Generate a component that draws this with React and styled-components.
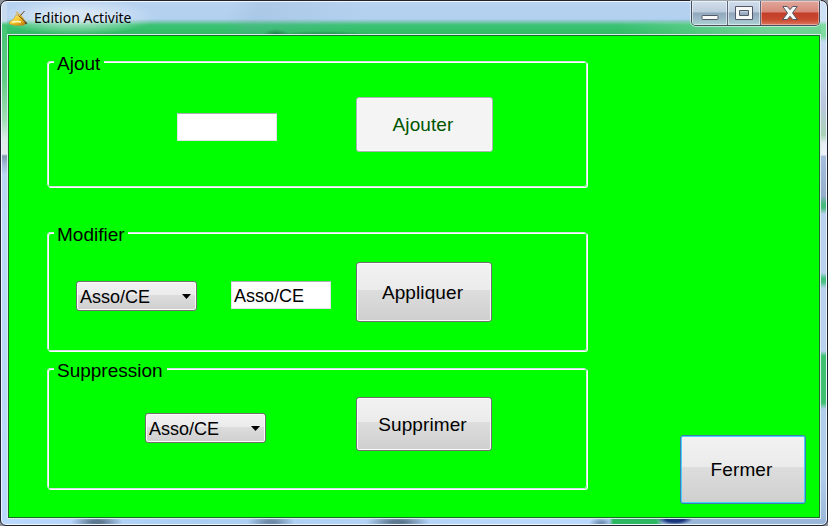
import React from "react";
import styled, { createGlobalStyle, css } from "styled-components";

const GlobalStyle = createGlobalStyle`
  *, *::before, *::after { box-sizing: border-box; }
  body { margin: 0; background: #8f9296; overflow: hidden; }
  button, input { font-family: inherit; margin: 0; }
`;

const Window = styled.main`
  width: 828px;
  height: 526px;
  display: flex;
  flex-direction: column;
  padding: 1px 6px 6px;
  border: 1px solid #20222e;
  border-radius: 7px 7px 6px 6px;
  box-shadow: inset 0 0 0 1px #eef6ff;
  font-family: "Liberation Sans", Arial, sans-serif;
  background:
    radial-gradient(ellipse 26px 7px at 96px 521px, #5d7890 20%, transparent) no-repeat,
    radial-gradient(ellipse 24px 7px at 270px 521px, #6f8ba8 20%, transparent) no-repeat,
    radial-gradient(ellipse 32px 7px at 397px 521px, #5d7890 20%, transparent) no-repeat,
    radial-gradient(ellipse 12px 6px at 600px 522px, #7795b8 20%, transparent) no-repeat,
    radial-gradient(ellipse 18px 6px at 674px 518px, #18347c 50%, transparent) no-repeat,
    linear-gradient(90deg, transparent 608px, #2bb860 612px, #2bb860 655px, #9ab6d8 662px) 0 518px / 100% 8px no-repeat,
    linear-gradient(180deg, #d0e2f8 0, #cddff5 20px, #80dba0 24px, #80dba0 35px, #c6dbf2 41px,
      #c3d4ea 75px, #b9c6dc 105px, #a9d4b8 134px, #e6eef4 142px, #eef3f8 154px, #a6bfe0 155px, #94aecb 195px,
      #48ba7e 203px, #48ba7e 207px, #b8d2ef 213px, #b8d2ef 272px, #48c084 277px, #48c084 281px,
      #b8d2ef 287px, #b8d2ef 350px, #3ec070 355px, #3ec070 402px, #b0cdec 408px, #b0cdec 475px, #9ab6d8) 100% 0 / 8px 100% no-repeat,
    linear-gradient(180deg, #c8daee 0, #c8daee 20px, #44c574 24px, #63cc88 80px, #a5deb9 120px,
      #dcebe8 138px, #e6e9ee 153px, #8297af 155px, #a0b9d6 163px, #bbd7f6 174px, #bbd9ff) 0 0 / 8px 100% no-repeat,
    linear-gradient(90deg, #bbd9ff 0, #abcef2 200px, #b9d8fa 520px, #bbd9ff 610px) no-repeat;
`;

const TitleBar = styled.header`
  height: 32px;
  flex: none;
  display: flex;
  align-items: flex-start;
  background:
    radial-gradient(ellipse 80px 18px at 70px 15px, #edf4f8a0 30%, transparent) no-repeat,
    radial-gradient(ellipse 13px 6px at 269px 33px, #0c5a35b0, transparent) no-repeat,
    radial-gradient(ellipse 50px 4px at 315px 33px, #0c5a3580, transparent) no-repeat,
    linear-gradient(115deg, transparent 205px, #7b9cb928 230px, transparent 330px) no-repeat,
    linear-gradient(90deg, transparent 610px, #a9e6bd80 760px) 0 20px / 100% 12px no-repeat,
    linear-gradient(180deg, #b8d2f0 0, #b2d0f0 17px, #78c6b0 20px, #3cc375 23px, #2fbb63 32px);
`;

const TitleText = styled.h1`
  margin: 6px auto 0 5px;
  font: 400 14px/20px "Noto Sans", "Open Sans", sans-serif;
  letter-spacing: 0;
  color: #000;
  white-space: nowrap;
`;

const AppIcon = styled.svg`
  width: 21px;
  height: 18px;
  margin: 7px 0 0 1px;
`;

const Controls = styled.div`
  display: flex;
  height: 25px;
  margin: -1px 1px 0 0;
  border: 1px solid #454c5e;
  border-top: 0;
  border-radius: 0 0 5px 5px;
  overflow: hidden;
  box-shadow: 0 0 0 1px #eaf5f5a0;
`;

const ControlButton = styled.button`
  width: ${(p) => p.$width}px;
  display: flex;
  align-items: center;
  justify-content: center;
  padding: 0;
  border: 0;
  border-left: ${(p) => (p.$divided ? "1px solid #5d687c" : "0")};
  background: ${(p) =>
    p.$danger
      ? "linear-gradient(180deg, #e1a79d 0, #d88678 11px, #c33d27 12px, #cb4a31 19px, #db7860 24px)"
      : "linear-gradient(180deg, #d2dfed 0, #bccbdc 11px, #91a6bd 12px, #9fb8c9 18px, #aed2d3 24px)"};
  box-shadow: inset 0 0 0 1px ${(p) => (p.$danger ? "#ffffff60" : "#ffffff85")};
`;

const Client = styled.section`
  width: 814px;
  height: 485px;
  display: flex;
  justify-content: space-between;
  border: 1px solid #d8ece9;
  outline: 1px solid #1c6a2c;
  outline-offset: -2px;
  padding: 26px 14px 14px 39px;
  background: #00ff00;
`;

const Groups = styled.div`
  width: 540px;
`;

const Group = styled.section`
  height: ${(p) => p.$height}px;
  margin-bottom: ${(p) => p.$after || 0}px;
  border: 1px solid #d5dfe5;
  border-radius: 3px;
  box-shadow: 1px 1px 0 #fff, inset 1px 1px 0 #fff;
`;

const Legend = styled.h2`
  width: ${(p) => p.$width}px;
  height: 20px;
  margin: -8px 0 0 6px;
  padding-left: 3px;
  background: #00ff00;
  font-size: 19px;
  font-weight: 400;
  line-height: 20px;
  white-space: nowrap;
`;

const Fields = styled.div`
  display: flex;
  align-items: flex-start;
  padding: ${(p) => p.$top}px 0 0 ${(p) => p.$left}px;
`;

const PushButton = styled.button`
  width: ${(p) => p.$width || 136}px;
  height: ${(p) => p.$height}px;
  margin-left: ${(p) => p.$before || 0}px;
  padding: 1px 3px 0 0;
  border: 1px solid #707070;
  border-radius: 3px;
  background: linear-gradient(180deg, #f2f2f2 0, #ebebeb 46%, #dddddd 47%, #cfcfcf 100%);
  box-shadow: inset 0 0 0 1px #fbfbfb;
  color: #000;
  font-size: 19px;
  letter-spacing: 0.1px;
  line-height: 22px;
  ${(p) =>
    p.$muted &&
    css`
      border-color: #adb2b5;
      background: #f4f4f4;
      color: #005500;
    `}
  ${(p) =>
    p.$focused &&
    css`
      align-self: flex-end;
      border-color: #3c7fb1;
      box-shadow: inset 0 0 0 1px #48d0fa;
    `}
`;

const TextBox = styled.input`
  width: ${(p) => p.$width}px;
  height: ${(p) => p.$height}px;
  margin-top: ${(p) => p.$drop}px;
  margin-left: ${(p) => p.$before || 0}px;
  padding: 2px 2px 0;
  border: 1px solid #e2e3ea;
  border-top-color: #abadb3;
  border-radius: 1px;
  outline: 0;
  background: #fff;
  color: #000;
  font-size: 18px;
`;

const Combo = styled.button`
  width: 121px;
  height: 30px;
  margin-top: ${(p) => p.$drop}px;
  display: flex;
  align-items: center;
  justify-content: space-between;
  padding: 2px 5px 0 3px;
  border: 1px solid #707070;
  border-radius: 3px;
  background: linear-gradient(180deg, #f2f2f2 0, #ebebeb 46%, #dddddd 47%, #cfcfcf 100%);
  box-shadow: inset 0 0 0 1px #fbfbfb;
  color: #000;
  font-size: 18px;
  line-height: 22px;
`;

const Arrow = styled.svg`
  width: 9px;
  height: 5px;
  margin-bottom: 1px;
`;

function Select({ drop, children }) {
  return (
    <Combo $drop={drop}>
      <span>{children}</span>
      <Arrow viewBox="0 0 9 5"><path d="M0 0h9L4.500 5z" fill="#000" /></Arrow>
    </Combo>
  );
}

export default function App() {
  return (
    <>
      <GlobalStyle />
      <Window>
        <TitleBar>
          <AppIcon viewBox="0 0 21 18">
            <defs>
              <linearGradient id="gold" x1="0" y1="0" x2="1" y2="1">
                <stop offset="0" stopColor="#fff6a0" />
                <stop offset=".5" stopColor="#f6c72c" />
                <stop offset="1" stopColor="#b86a0c" />
              </linearGradient>
            </defs>
            <path d="M1.500 13Q6 11 8 6l4-1 3 4 3 5-2 2q-8 1.500-14.500-1z" fill="url(#gold)" stroke="#c28b22" strokeWidth=".6" />
            <path d="M4 13q6-1 9 0" stroke="#fffbc5" strokeWidth="1.5" fill="none" />
            <path d="M9 5l9.500 9M12.500 6.500l4-4.500" stroke="#69401f" strokeWidth="1" />
            <path d="M7.500 3.500l2-1.500 2 3.500-2 2z" fill="#d4bd83" />
            <path d="M16.500 12.500l3 1.500-2 1.500z" fill="#54351e" />
          </AppIcon>
          <TitleText>Edition Activite</TitleText>
          <Controls>
            <ControlButton $width={35} aria-label="Réduire">
              <svg width="18" height="24"><rect x="1" y="14.500" width="16" height="4" rx=".7" fill="#f8f8f8" stroke="#535868" /></svg>
            </ControlButton>
            <ControlButton $width={33} $divided aria-label="Agrandir">
              <svg width="18" height="24"><path fillRule="evenodd" d="M.5 5.500h17v13H.5zM4.500 9.500v5h9v-5z" fill="#f8f8f8" stroke="#535868" /></svg>
            </ControlButton>
            <ControlButton $width={59} $divided $danger aria-label="Fermer la fenêtre">
              <svg width="16" height="24"><path d="M.8 5.500h4.500L8 8.700l2.700-3.200h4.500L10.500 12l4.700 6.500h-4.500L8 15.300l-2.700 3.200H.8L5.500 12z" fill="#f8f8f8" stroke="#535868" strokeLinejoin="round" /></svg>
            </ControlButton>
          </Controls>
        </TitleBar>
        <Client>
          <Groups>
            <Group $height={126} $after={45}>
              <Legend $width={50}>Ajout</Legend>
              <Fields $top={23} $left={129}>
                <TextBox $width={100} $height={28} $drop={16} aria-label="Nouvelle activité" />
                <PushButton $width={137} $height={55} $before={79} $muted>Ajouter</PushButton>
              </Fields>
            </Group>
            <Group $height={119} $after={17}>
              <Legend $width={74}>Modifier</Legend>
              <Fields $top={17} $left={28}>
                <Select drop={19}>Asso/CE</Select>
                <TextBox $width={100} $height={28} $drop={19} $before={34} defaultValue="Asso/CE" aria-label="Activité" />
                <PushButton $height={60} $before={25}>Appliquer</PushButton>
              </Fields>
            </Group>
            <Group $height={121}>
              <Legend $width={113}>Suppression</Legend>
              <Fields $top={16} $left={97}>
                <Select drop={16}>Asso/CE</Select>
                <PushButton $height={54} $before={90}>Supprimer</PushButton>
              </Fields>
            </Group>
          </Groups>
          <PushButton $width={126} $height={69} $focused>Fermer</PushButton>
        </Client>
      </Window>
    </>
  );
}
